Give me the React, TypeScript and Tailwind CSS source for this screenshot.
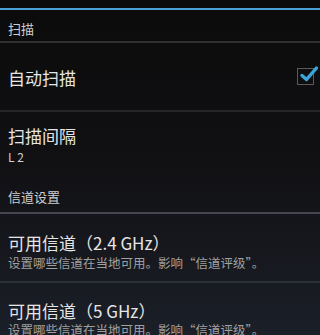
import React from "react";

const font = { fontFamily: '"Noto Sans CJK SC", "Noto Sans", sans-serif' };

function Check() {
  return (
    <div className="relative w-[17px] h-[17px] border border-[#5a5a5a] mr-[4px]">
      <svg className="absolute left-[1px] top-[-4px]" width="20" height="18" viewBox="0 0 20 18">
        <path d="M3 10.5 L7.5 14.5 L17.5 3" fill="none" stroke="#3aa6dc" strokeWidth="3.4" strokeLinecap="round" strokeLinejoin="round" />
      </svg>
    </div>
  );
}

export default function App() {
  return (
    <div
      className="w-[320px] h-[335px] overflow-hidden text-[#e6e6e6] bg-gradient-to-b from-[#0b0b0b] via-[#111114] to-[#1b1f28]"
      style={font}
    >
      <div className="h-[8px] bg-[#0b0b0b]" />
      <div className="h-[2px] bg-[#4a9fd4]" />
      <div className="h-[31px] pl-[8px] pt-[12px] text-[13px] leading-[14px] text-[#cfcfcf]">扫描</div>
      <div className="h-[2px] bg-[#2f2f2f]" />
      <div className="h-[67px] flex items-center justify-between pl-[8px] pr-[2px]">
        <div className="text-[17px] leading-[20px] mt-[2px]">自动扫描</div>
        <Check />
      </div>
      <div className="h-[2px] bg-[#262626]" />
      <div className="h-[52px] pl-[8px] pt-[14px]">
        <div className="text-[17px] leading-[20px]">扫描间隔</div>
        <div className="text-[12px] leading-[14px] text-[#cfcfcf] mt-[4px]">L 2</div>
      </div>
      <div className="h-[48px] pl-[8px] pt-[26px] text-[13px] leading-[14px] text-[#cfcfcf]">信道设置</div>
      <div className="h-[2px] bg-[#44474f]" />
      <div className="h-[67px] pl-[8px] pt-[18px]">
        <div className="text-[17px] leading-[21px]">可用信道（2.4 GHz）</div>
        <div className="text-[12.5px] leading-[15px] text-[#a0a0a0] mt-[2px]">设置哪些信道在当地可用。影响“信道评级”。</div>
      </div>
      <div className="h-[2px] bg-[#2c3038]" />
      <div className="pl-[8px] pt-[17px]">
        <div className="text-[17px] leading-[21px]">可用信道（5 GHz）</div>
        <div className="text-[12.5px] leading-[15px] text-[#a0a0a0] mt-[1px]">设置哪些信道在当地可用。影响“信道评级”。</div>
      </div>
    </div>
  );
}
